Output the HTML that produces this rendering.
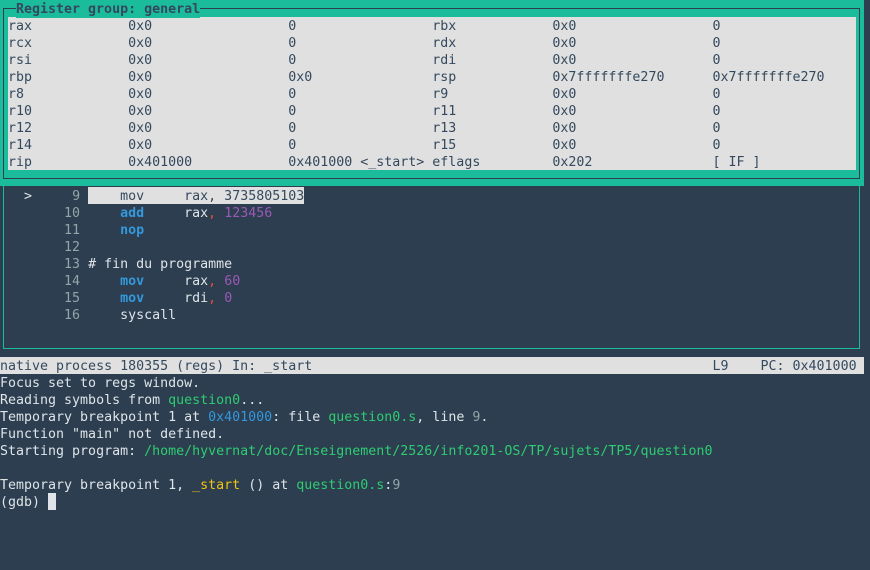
<!DOCTYPE html>
<html><head><meta charset="utf-8"><style>
html,body{margin:0;padding:0;width:870px;height:570px;overflow:hidden;background:#2c3e50;}
.t{position:absolute;left:0;font-family:"DejaVu Sans Mono","Liberation Mono",monospace;font-size:13.3px;line-height:17px;height:17px;white-space:pre;color:#dfe4e8;padding-top:1px;}
.r{color:#34495e;}
.k{color:#3498db;font-weight:bold;}
.p{color:#9b59b6;}
.c{color:#e74c3c;}
.g{color:#2ecc71;}
.b{color:#3498db;}
.y{color:#f1c40f;}
.n{color:#95a5a6;}
</style></head><body>
<div style="position:absolute;left:0;top:0;width:864px;height:186px;background:#1abc9c"></div>
<div style="position:absolute;left:3px;top:8px;width:855px;height:169px;border:1px solid #2c3e50"></div>
<div style="position:absolute;left:8px;top:17px;width:848px;height:153px;background:#e0e0e0"></div>
<div class="t" style="top:0;left:16px;background:#1abc9c;color:#34495e;font-weight:bold">Register group: general</div>
<div class="t r" style="top:17px"> rax            0x0                 0                 rbx            0x0                 0</div>
<div class="t r" style="top:34px"> rcx            0x0                 0                 rdx            0x0                 0</div>
<div class="t r" style="top:51px"> rsi            0x0                 0                 rdi            0x0                 0</div>
<div class="t r" style="top:68px"> rbp            0x0                 0x0               rsp            0x7fffffffe270      0x7fffffffe270</div>
<div class="t r" style="top:85px"> r8             0x0                 0                 r9             0x0                 0</div>
<div class="t r" style="top:102px"> r10            0x0                 0                 r11            0x0                 0</div>
<div class="t r" style="top:119px"> r12            0x0                 0                 r13            0x0                 0</div>
<div class="t r" style="top:136px"> r14            0x0                 0                 r15            0x0                 0</div>
<div class="t r" style="top:153px"> rip            0x401000            0x401000 &lt;_start&gt; eflags         0x202               [ IF ]</div>
<div style="position:absolute;left:3px;top:186px;width:855px;height:162px;border:1px solid #1abc9c;border-top:none"></div>
<div style="position:absolute;left:88px;top:187px;width:216px;height:17px;background:#e0e0e0"></div>
<div class="t" style="top:187px">   &gt;     <span class="n">9</span> <span class="r">    mov     rax, 3735805103</span></div>
<div class="t" style="top:204px"><span class="n">        10</span>     <span class="k">add</span>     rax<span class="c">,</span> <span class="p">123456</span></div>
<div class="t" style="top:221px"><span class="n">        11</span>     <span class="k">nop</span></div>
<div class="t" style="top:238px"><span class="n">        12</span></div>
<div class="t" style="top:255px"><span class="n">        13</span> # fin du programme</div>
<div class="t" style="top:272px"><span class="n">        14</span>     <span class="k">mov</span>     rax<span class="c">,</span> <span class="p">60</span></div>
<div class="t" style="top:289px"><span class="n">        15</span>     <span class="k">mov</span>     rdi<span class="c">,</span> <span class="p">0</span></div>
<div class="t" style="top:306px"><span class="n">        16</span>     syscall</div>
<div style="position:absolute;left:0;top:357px;width:864px;height:17px;background:#e0e0e0"></div>
<div class="t r" style="top:357px">native process 180355 (regs) In: _start                                                  L9    PC: 0x401000</div>
<div class="t" style="top:374px">Focus set to regs window.</div>
<div class="t" style="top:391px">Reading symbols from <span class="g">question0</span>...</div>
<div class="t" style="top:408px">Temporary breakpoint 1 at <span class="b">0x401000</span>: file <span class="g">question0.s</span>, line <span class="n">9</span>.</div>
<div class="t" style="top:425px">Function "main" not defined.</div>
<div class="t" style="top:442px">Starting program: <span class="g">/home/hyvernat/doc/Enseignement/2526/info201-OS/TP/sujets/TP5/question0</span></div>
<div class="t" style="top:476px">Temporary breakpoint 1, <span class="y">_start</span> () at <span class="g">question0.s</span>:<span class="n">9</span></div>
<div class="t" style="top:493px">(gdb) </div>
<div style="position:absolute;left:48px;top:493px;width:8px;height:17px;background:#dfe4e8"></div>
</body></html>
